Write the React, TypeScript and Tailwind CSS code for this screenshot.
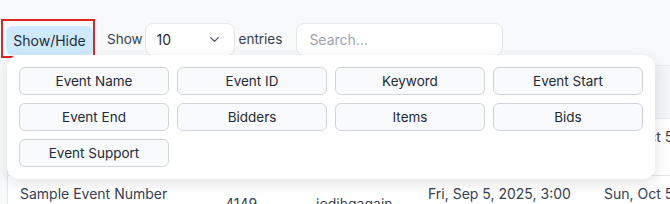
import React, { useState } from 'react';
import { ChevronDown } from 'lucide-react';

const COLUMNS = [
  'Event Name',
  'Event ID',
  'Keyword',
  'Event Start',
  'Event End',
  'Bidders',
  'Items',
  'Bids',
  'Event Support',
];

const ROWS = [
  { name: 'Sample Event Number 4150', id: '4150', keyword: 'jodihgtest', start: 'Sat, Sep 6, 2025, 3:00 PM', end: 'Sun, Oct 5, 2025, 3:00 PM' },
  { name: 'Sample Event Number 4149', id: '4149', keyword: 'jodihgagain', start: 'Fri, Sep 5, 2025, 3:00 PM', end: 'Sun, Oct 5, 2025, 3:00 PM' },
];

export default function App() {
  const [open, setOpen] = useState(true);

  return (
    <div className="relative min-h-screen overflow-hidden bg-[#f8f9fa] font-['Inter','Liberation_Sans',sans-serif] text-[#1f2937]">
      {/* toolbar */}
      <div className="mt-[23px] flex h-[33px] items-start pl-[6px]">
        <button
          onClick={() => setOpen(!open)}
          className="mt-[3px] h-[29px] w-[87px] rounded-[6px] bg-[#cfe9fe] text-[14px] font-normal text-[#1f2937]"
        >
          Show/Hide
        </button>
        <span className="ml-[14px] self-center text-[13.5px] text-[#374151]">Show</span>
        <div className="ml-[2px] flex h-[33px] w-[90px] items-center justify-between rounded-[8px] border border-[#e5e7eb] bg-white pl-[11px] pr-[12px] text-[14px] text-[#1f2937]">
          <span>10</span>
          <ChevronDown size={15} strokeWidth={2} className="text-[#4b5563]" />
        </div>
        <span className="ml-[4px] self-center text-[13.5px] text-[#374151]">entries</span>
        <div className="ml-[14px] flex h-[33px] w-[207px] items-center rounded-[8px] border border-[#e5e7eb] bg-white pl-[12px] text-[14px] text-[#9ca3af]">
          Search...
        </div>
      </div>

      {/* table */}
      <div className="ml-[7px] mt-[9px] w-[800px] border-l border-t border-[#e5e7eb] bg-white text-[14px] text-[#374151]">
        <div className="flex h-[53px] items-center border-b border-[#e5e7eb] bg-[#f3f4f6] font-semibold">
          <div className="w-[205px] px-3">Event Name</div>
          <div className="w-[91px] px-3">Event ID</div>
          <div className="w-[112px] px-3">Keyword</div>
          <div className="w-[176px] px-3">Start</div>
          <div className="w-[180px] px-3" />
        </div>
        {ROWS.map((r) => (
          <div key={r.id} className="flex items-center border-b border-[#e5e7eb] py-2 leading-5">
            <div className="w-[205px] px-3">{r.name}</div>
            <div className="w-[91px] px-3">{r.id}</div>
            <div className="w-[112px] px-3">{r.keyword}</div>
            <div className="w-[176px] px-3">{r.start}</div>
            <div className="w-[180px] px-3">{r.end}</div>
          </div>
        ))}
      </div>

      {/* red highlight annotation */}
      <div className="pointer-events-none absolute left-[1px] top-[19px] h-[39px] w-[94px] border-2 border-[#e02424]" />

      {/* column visibility panel */}
      {open && (
        <div className="absolute left-[7px] top-[55px] w-[648px] rounded-[12px] bg-white p-3 shadow-[0_4px_14px_rgba(0,0,0,0.12)]">
          <div className="grid grid-cols-4 gap-2">
            {COLUMNS.map((c) => (
              <button
                key={c}
                className="h-[28px] rounded-[6px] border border-[#d1d5db] bg-[#f9fafb] text-[13.5px] font-normal text-[#1f2937]"
              >
                {c}
              </button>
            ))}
          </div>
        </div>
      )}
    </div>
  );
}
